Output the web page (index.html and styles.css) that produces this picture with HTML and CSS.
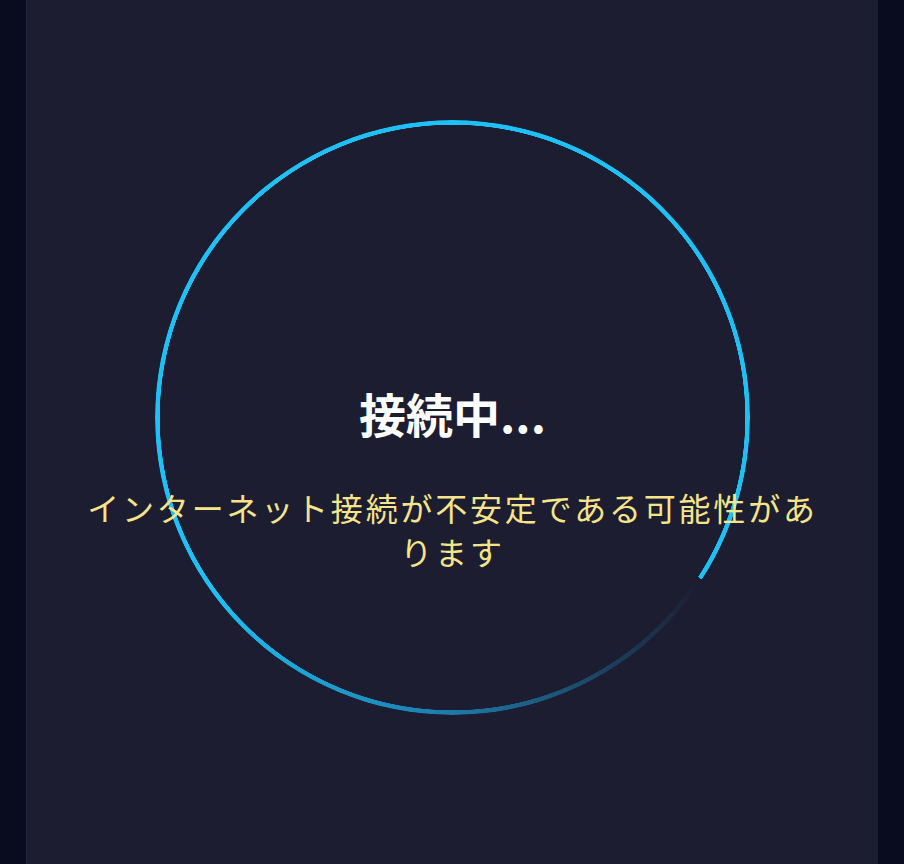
FILE: index.html
```html
<!DOCTYPE html>
<html lang="ja">
<head>
    <meta charset="UTF-8">
    <meta name="viewport" content="width=device-width, initial-scale=1.0">
    <title>接続中</title>
    <link rel="stylesheet" href="styles.css">
</head>
<body>
    <div class="screen">
        <!-- 回転リング -->
        <div class="ring"></div>

        <!-- 接続メッセージ -->
        <div class="status">
            <h1 class="status-title">接続中...</h1>
            <p class="status-note">インターネット接続が不安定である可能性があります</p>
        </div>
    </div>
</body>
</html>
```

FILE: styles.css
```css
html, body {
    margin: 0;
    padding: 0;
    height: 100%;
}

body {
    background: #080c1e;
    font-family: "Noto Sans CJK JP", "Noto Sans", sans-serif;
    overflow: hidden;
}

.screen {
    position: relative;
    width: 851px;
    height: 864px;
    margin-left: 26px;
    background: #1c1d30;
    border-left: 1px solid #23243a;
}

.ring {
    position: absolute;
    top: 120px;
    left: 128px;
    width: 595px;
    height: 595px;
    border-radius: 50%;
    background: conic-gradient(from 123deg,
        rgba(30, 192, 245, 0) 0deg,
        rgba(30, 170, 230, 0.25) 25deg,
        rgba(30, 170, 230, 0.7) 60deg,
        #1ec0f5 110deg,
        #1ec0f5 360deg);
    -webkit-mask: radial-gradient(farthest-side, transparent calc(100% - 5px), #000 calc(100% - 4.5px));
    mask: radial-gradient(farthest-side, transparent calc(100% - 5px), #000 calc(100% - 4.5px));
}

.status {
    position: relative;
    display: flex;
    flex-direction: column;
    align-items: center;
    padding-top: 386px;
    text-align: center;
}

.status-title {
    margin: 0;
    color: #ffffff;
    font-size: 47px;
    font-weight: bold;
    line-height: 54px;
}

.status-note {
    margin: 45px 0 0;
    width: 752px;
    color: #f6e48a;
    font-size: 32px;
    letter-spacing: 2.8px;
    line-height: 44px;
}
```
